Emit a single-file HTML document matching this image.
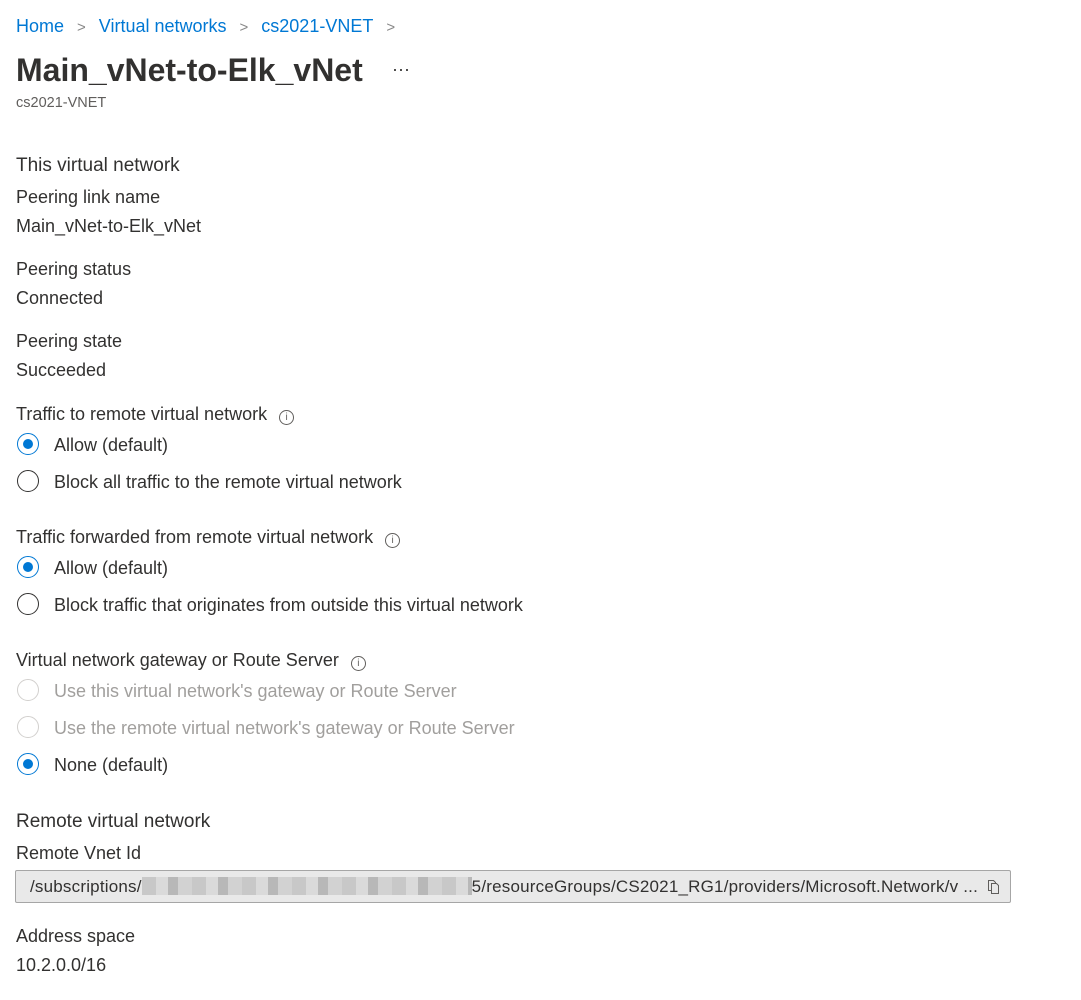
<!DOCTYPE html>
<html><head><meta charset="utf-8"><style>
body{margin:0;width:1081px;height:1000px;background:#fff;font-family:"Liberation Sans",sans-serif;color:#323130;position:relative;overflow:hidden}
.t{position:absolute;left:16px;font-size:18px;line-height:22px;white-space:nowrap}
.h{font-size:19px}
.l{color:#0078d4}
.bc{position:absolute;top:15px;left:16px;font-size:18px;line-height:22px;white-space:nowrap}
.bc span.s{color:#888;margin:0 13px;font-size:15px}
.r{position:absolute;left:17px;width:22px;height:22px;border:1.5px solid #323130;border-radius:50%;box-sizing:border-box}
.r.on{border-color:#0078d4}
.r.on::after{content:"";position:absolute;left:4.5px;top:4.5px;width:10px;height:10px;border-radius:50%;background:#0078d4}
.r.dis{border-color:#d2d0ce}
.ro{left:54px}
.dis-t{color:#a19f9d}
.i{display:inline-block;width:15px;height:15px;border:1px solid #605e5c;border-radius:50%;box-sizing:border-box;margin-left:12px;vertical-align:0px;font-size:10px;line-height:13px;text-align:center;color:#605e5c}
</style></head><body>
<div class="bc"><span class="l">Home</span><span class="s">&gt;</span><span class="l">Virtual networks</span><span class="s">&gt;</span><span class="l">cs2021-VNET</span><span class="s">&gt;</span></div>
<div class="t" style="top:50px;font-size:32px;line-height:40px;font-weight:600;color:#323130">Main_vNet-to-Elk_vNet</div>
<div class="t" style="top:58px;left:392px;font-size:18px">···</div>
<div class="t" style="top:94px;font-size:14.5px;line-height:18px;color:#605e5c">cs2021-VNET</div>

<div class="t h" style="top:155px">This virtual network</div>
<div class="t" style="top:186px">Peering link name</div>
<div class="t" style="top:215px">Main_vNet-to-Elk_vNet</div>
<div class="t" style="top:258px">Peering status</div>
<div class="t" style="top:287px">Connected</div>
<div class="t" style="top:330px">Peering state</div>
<div class="t" style="top:359px">Succeeded</div>

<div class="t" style="top:403px">Traffic to remote virtual network<span class="i">i</span></div>
<div class="r on" style="top:433px"></div><div class="t ro" style="top:434px">Allow (default)</div>
<div class="r" style="top:470px"></div><div class="t ro" style="top:471px">Block all traffic to the remote virtual network</div>

<div class="t" style="top:526px">Traffic forwarded from remote virtual network<span class="i">i</span></div>
<div class="r on" style="top:556px"></div><div class="t ro" style="top:557px">Allow (default)</div>
<div class="r" style="top:593px"></div><div class="t ro" style="top:594px">Block traffic that originates from outside this virtual network</div>

<div class="t" style="top:649px">Virtual network gateway or Route Server<span class="i">i</span></div>
<div class="r dis" style="top:679px"></div><div class="t ro dis-t" style="top:680px">Use this virtual network's gateway or Route Server</div>
<div class="r dis" style="top:716px"></div><div class="t ro dis-t" style="top:717px">Use the remote virtual network's gateway or Route Server</div>
<div class="r on" style="top:753px"></div><div class="t ro" style="top:754px">None (default)</div>

<div class="t h" style="top:811px">Remote virtual network</div>
<div class="t" style="top:842px">Remote Vnet Id</div>
<div style="position:absolute;left:15px;top:870px;width:996px;height:33px;box-sizing:border-box;background:#e9e9e9;border:1px solid #a6a6a6;border-radius:2px"></div>
<div class="t" style="top:876px;left:30px;font-size:17px;letter-spacing:0.2px">/subscriptions/<span style="display:inline-block;width:330px;height:18px;vertical-align:-3px;background:repeating-linear-gradient(90deg,#c8c8c8 0 14px,#dadada 14px 26px,#b8b8b8 26px 36px,#d2d2d2 36px 50px)"></span>5/resourceGroups/CS2021_RG1/providers/Microsoft.Network/v ...</div>
<svg style="position:absolute;left:986px;top:879px" width="16" height="16" viewBox="0 0 16 16" fill="none" stroke="#605e5c" stroke-width="1"><path d="M2.5 1.5h5l2 2v8h-7z"/><path d="M5.5 4.5h5l2 2v8h-7z" fill="#e9e9e9"/></svg>

<div class="t" style="top:925px">Address space</div>
<div class="t" style="top:954px">10.2.0.0/16</div>
</body></html>
